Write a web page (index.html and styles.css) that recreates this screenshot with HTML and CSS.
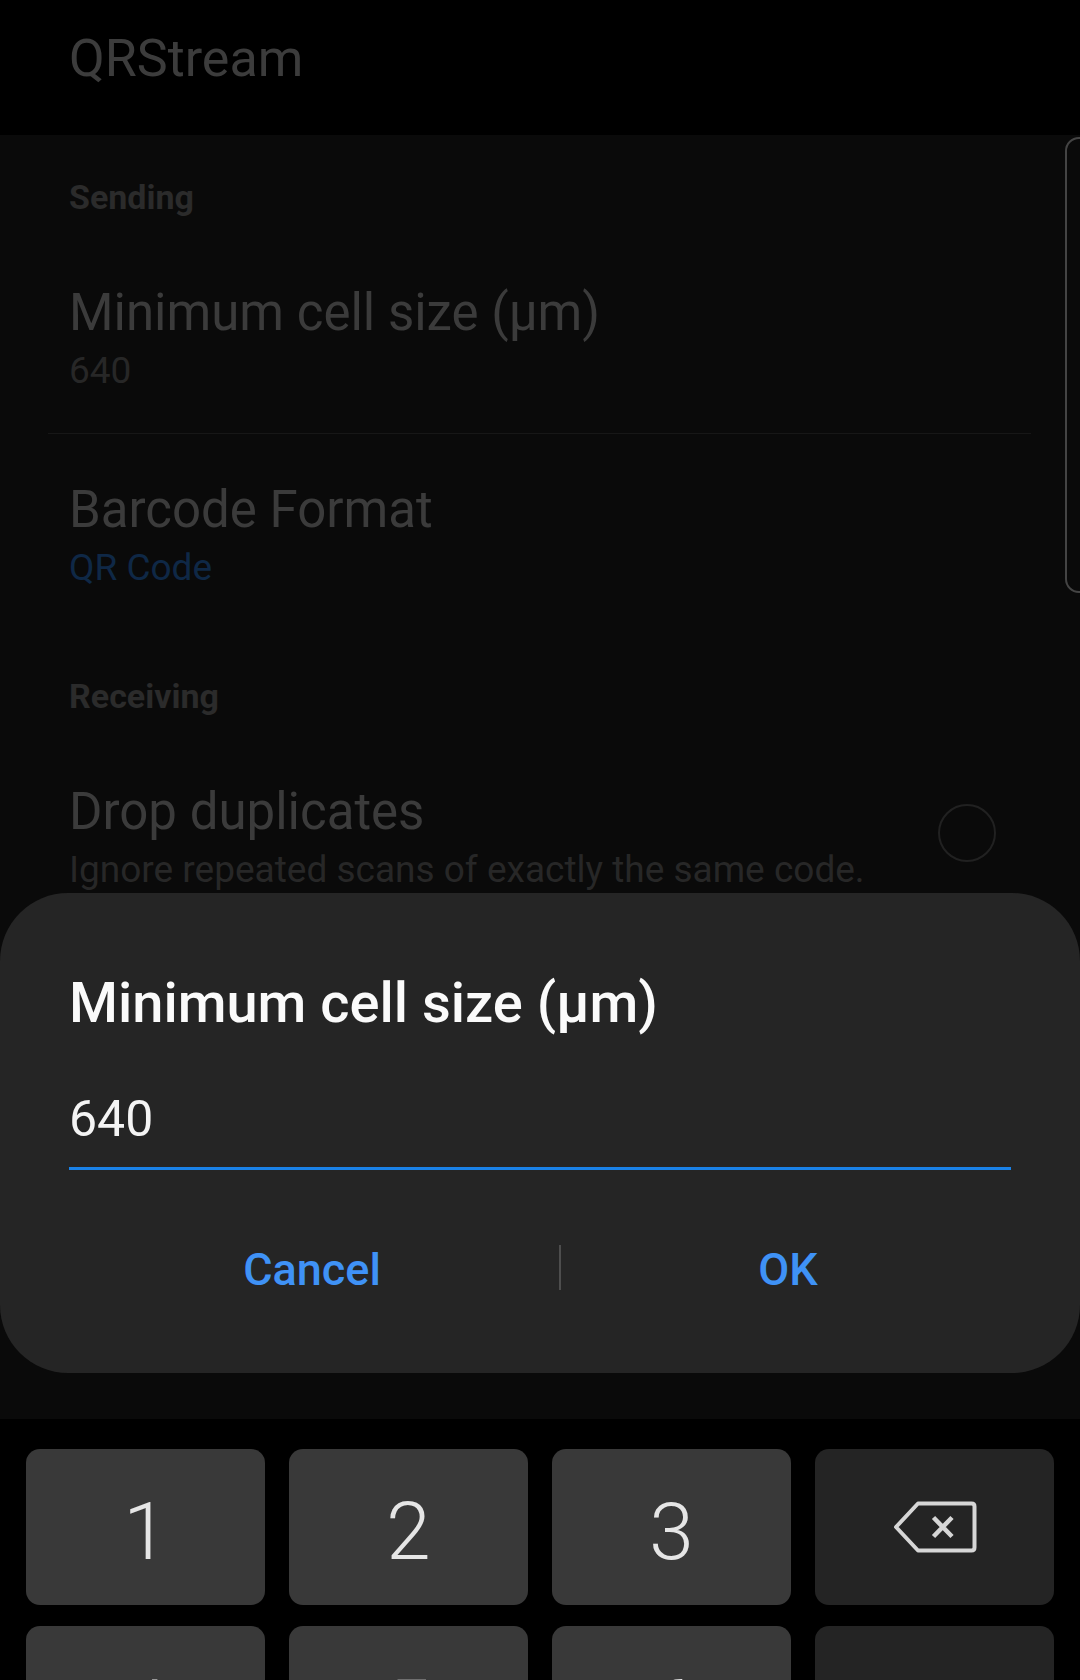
FILE: index.html
```html
<!DOCTYPE html>
<html lang="en">
<head>
<meta charset="utf-8">
<title>QRStream settings</title>
<link rel="stylesheet" href="styles.css">
</head>
<body>
<div class="screen">
  <header class="appbar">
    <h1 class="appbar-title">QRStream</h1>
  </header>

  <main class="settings">
    <div class="scrollbar"></div>

    <div class="category">Sending</div>
    <div class="pref">
      <div class="pref-text">
        <div class="pref-title">Minimum cell size (µm)</div>
        <div class="pref-summary">640</div>
      </div>
    </div>
    <div class="divider"></div>
    <div class="pref pref-last">
      <div class="pref-text">
        <div class="pref-title">Barcode Format</div>
        <div class="pref-summary pref-summary-accent">QR Code</div>
      </div>
    </div>

    <div class="category">Receiving</div>
    <div class="pref">
      <div class="pref-text">
        <div class="pref-title">Drop duplicates</div>
        <div class="pref-summary">Ignore repeated scans of exactly the same code.</div>
      </div>
      <div class="switch"></div>
    </div>

    <div class="dialog">
      <h2 class="dialog-title">Minimum cell size (µm)</h2>
      <div class="dialog-input">640</div>
      <div class="dialog-actions">
        <div class="dialog-btn">Cancel</div>
        <div class="dialog-sep"></div>
        <div class="dialog-btn">OK</div>
      </div>
    </div>
  </main>

  <div class="keyboard">
    <div class="key">1</div>
    <div class="key">2</div>
    <div class="key">3</div>
    <div class="key key-fn">
      <svg class="backspace" width="84" height="52" viewBox="0 0 84 52" aria-hidden="true">
        <path d="M3 26 L25 2.5 H78.5 Q81.5 2.5 81.5 5.5 V46.5 Q81.5 49.5 78.5 49.5 H25 Z" fill="none" stroke="#d6d6d6" stroke-width="4" stroke-linejoin="round"/>
        <path d="M40.5 16.5 L59 35.5 M59 16.5 L40.5 35.5" fill="none" stroke="#d6d6d6" stroke-width="4.5"/>
      </svg>
    </div>
    <div class="key">4</div>
    <div class="key">5</div>
    <div class="key">6</div>
    <div class="key key-fn">.</div>
  </div>
</div>
</body>
</html>
```

FILE: styles.css
```css
html, body {
  margin: 0;
  padding: 0;
  background: #000;
}

body {
  width: 1080px;
  height: 1680px;
  overflow: hidden;
  font-family: Roboto, "Noto Sans", "Liberation Sans", sans-serif;
}

.screen {
  width: 1080px;
  height: 1680px;
  display: flex;
  flex-direction: column;
}

/* App bar */
.appbar {
  height: 135px;
  flex-shrink: 0;
  box-sizing: border-box;
  padding: 29px 0 0 69px;
  background: #000;
}

.appbar-title {
  margin: 0;
  font-size: 52px;
  line-height: 60px;
  font-weight: 400;
  color: #3c3c3c;
}

/* Settings list (dimmed behind dialog) */
.settings {
  position: relative;
  height: 1284px;
  flex-shrink: 0;
  background: #0a0a0a;
  overflow: hidden;
}

.scrollbar {
  position: absolute;
  top: 2px;
  left: 1065px;
  width: 40px;
  height: 456px;
  box-sizing: border-box;
  border: 2px solid #444;
  border-radius: 14px;
}

.category {
  padding: 42px 69px 20px;
  font-size: 34px;
  line-height: 40px;
  font-weight: 700;
  color: #2b2b2b;
}

.pref {
  display: flex;
  align-items: center;
  padding: 46px 84px 40px 69px;
}

.pref-last {
  padding-bottom: 44px;
}

.pref-text {
  flex: 1;
  min-width: 0;
}

.pref-title {
  font-size: 51px;
  line-height: 60px;
  color: #3b3b3b;
}

.pref-summary {
  margin-top: 6px;
  font-size: 37px;
  line-height: 44px;
  color: #272727;
}

.pref-summary-accent {
  color: #0f2846;
}

.divider {
  height: 1px;
  margin: 0 49px 0 48px;
  background: #171717;
}

.switch {
  flex-shrink: 0;
  width: 58px;
  height: 58px;
  margin-bottom: 9px;
  box-sizing: border-box;
  border: 2.5px solid #212121;
  border-radius: 50%;
}

/* Dialog */
.dialog {
  position: absolute;
  top: 758px;
  left: 0;
  right: 0;
  height: 480px;
  box-sizing: border-box;
  padding-top: 77px;
  background: #252525;
  border-radius: 68px;
}

.dialog-title {
  margin: 0 69px;
  font-size: 56px;
  line-height: 66px;
  font-weight: 500;
  color: #fafafa;
}

.dialog-input {
  margin: 53px 69px 0;
  padding-bottom: 18px;
  border-bottom: 3px solid #1a82e8;
  font-size: 50px;
  line-height: 60px;
  color: #f4f4f4;
}

.dialog-actions {
  display: grid;
  grid-template-columns: 494px 2px 1fr;
  align-items: center;
  margin-top: 73px;
  padding: 0 65px;
}

.dialog-btn {
  text-align: center;
  font-size: 45px;
  line-height: 54px;
  font-weight: 500;
  color: #3f92f6;
}

.dialog-sep {
  height: 45px;
  margin-bottom: 5px;
  background: #4d4d4d;
}

/* Keyboard */
.keyboard {
  height: 261px;
  flex-shrink: 0;
  box-sizing: border-box;
  padding: 30px 26px 0;
  background: #000;
  display: grid;
  grid-template-columns: repeat(4, 239px);
  grid-auto-rows: 156px;
  column-gap: 24px;
  row-gap: 21px;
  overflow: hidden;
}

.key {
  display: flex;
  align-items: center;
  justify-content: center;
  box-sizing: border-box;
  padding-top: 9px;
  background: #393939;
  border-radius: 14px;
  color: #e6e6e6;
  font-size: 80px;
  line-height: 1;
  font-weight: 300;
}

.key-fn {
  background: #242424;
  padding-top: 0;
}

.backspace {
  display: block;
}
```
